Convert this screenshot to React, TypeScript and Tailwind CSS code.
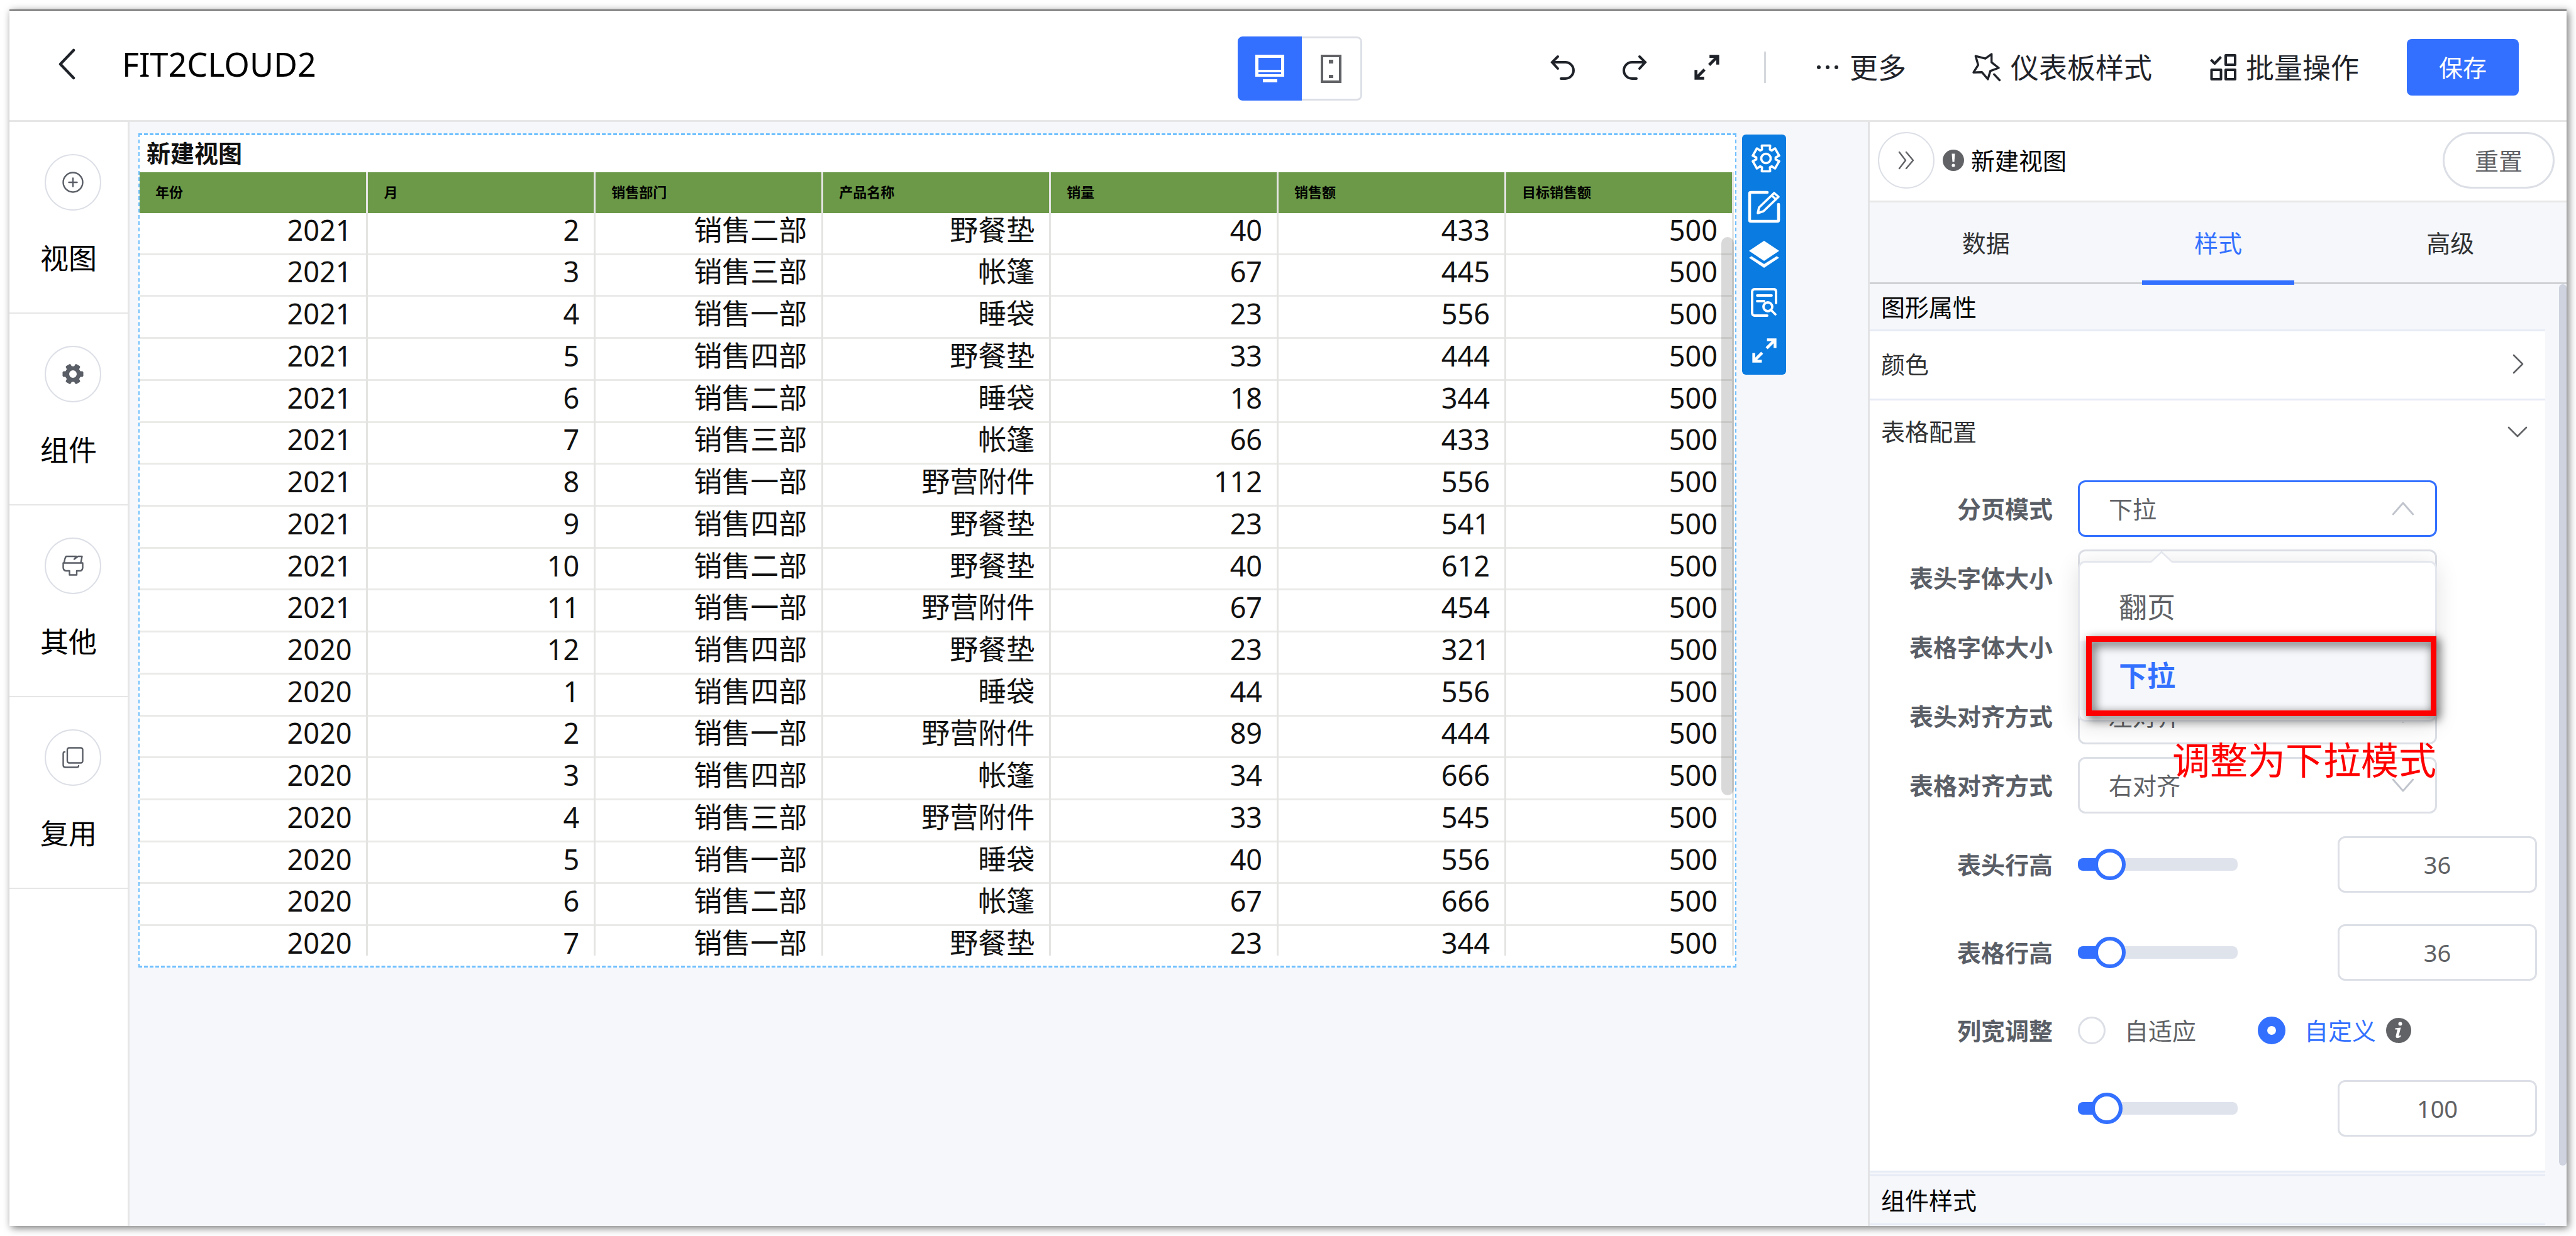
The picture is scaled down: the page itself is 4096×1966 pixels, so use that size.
import React, { useState } from "react";

const columns = ["年份", "月", "销售部门", "产品名称", "销量", "销售额", "目标销售额"];

const rows: string[][] = [
  ["2021", "2", "销售二部", "野餐垫", "40", "433", "500"],
  ["2021", "3", "销售三部", "帐篷", "67", "445", "500"],
  ["2021", "4", "销售一部", "睡袋", "23", "556", "500"],
  ["2021", "5", "销售四部", "野餐垫", "33", "444", "500"],
  ["2021", "6", "销售二部", "睡袋", "18", "344", "500"],
  ["2021", "7", "销售三部", "帐篷", "66", "433", "500"],
  ["2021", "8", "销售一部", "野营附件", "112", "556", "500"],
  ["2021", "9", "销售四部", "野餐垫", "23", "541", "500"],
  ["2021", "10", "销售二部", "野餐垫", "40", "612", "500"],
  ["2021", "11", "销售一部", "野营附件", "67", "454", "500"],
  ["2020", "12", "销售四部", "野餐垫", "23", "321", "500"],
  ["2020", "1", "销售四部", "睡袋", "44", "556", "500"],
  ["2020", "2", "销售一部", "野营附件", "89", "444", "500"],
  ["2020", "3", "销售四部", "帐篷", "34", "666", "500"],
  ["2020", "4", "销售三部", "野营附件", "33", "545", "500"],
  ["2020", "5", "销售一部", "睡袋", "40", "556", "500"],
  ["2020", "6", "销售二部", "帐篷", "67", "666", "500"],
  ["2020", "7", "销售一部", "野餐垫", "23", "344", "500"],
];

type IconProps = { className?: string };

const stroke = {
  fill: "none",
  stroke: "currentColor",
  strokeLinecap: "round" as const,
  strokeLinejoin: "round" as const,
};

function ChevronIcon({ className, d }: IconProps & { d: string }) {
  return (
    <svg viewBox="0 0 32 32" className={className} {...stroke} strokeWidth={2.6} aria-hidden="true">
      <path d={d} />
    </svg>
  );
}

function BackIcon() {
  return (
    <svg viewBox="0 0 28 50" className="h-[50px] w-7" {...stroke} strokeWidth={4.5} aria-hidden="true">
      <path d="M25 3 L4 25 L25 47" />
    </svg>
  );
}

function MonitorIcon() {
  return (
    <svg viewBox="0 0 46 44" className="h-11 w-[46px]" aria-hidden="true">
      <path fill="currentColor" fillRule="evenodd" d="M0 0h46v35H0zM5 5v19h36V5zM5 28v3h36v-3zM12 39h23v5H12z" />
    </svg>
  );
}

function PhoneIcon() {
  return (
    <svg viewBox="0 0 33 45" className="h-[45px] w-[33px]" aria-hidden="true">
      <path fill="currentColor" fillRule="evenodd" d="M0 0h33v45H0zM4 4v37h25V4zM13 8h7v6h-7zM13 32h7v5h-7z" />
    </svg>
  );
}

function UndoIcon({ className }: IconProps) {
  return (
    <svg viewBox="0 0 40 40" className={className} {...stroke} strokeWidth={4} strokeLinejoin="miter" aria-hidden="true">
      <path d="M12 3 L3 12 L12 22" />
      <path d="M4 12 H24 A13 13 0 0 1 24 38 H17" />
    </svg>
  );
}

function ExpandIcon({ className }: IconProps) {
  return (
    <svg viewBox="0 0 40 40" className={className} fill="none" stroke="currentColor" strokeWidth={4.4} aria-hidden="true">
      <path d="M24 3.5 H36.500 V16 M36 4 L23.500 16.500" />
      <path d="M16 36.500 H3.500 V24 M4 36 L16.500 23.500" />
    </svg>
  );
}

function StarIcon() {
  return (
    <svg viewBox="0 0 46 46" className="size-[46px]" {...stroke} strokeWidth={3.4} aria-hidden="true">
      <path d="M5.400 5.200 L20.800 9.200 L30.700 2 L30.700 15.100 L42 24 L28.800 28.800 L24.800 42 L15.300 30.700 L2 31.200 L9.400 19.400 Z" />
      <path d="M34.700 34.200 L43.500 43.500" />
    </svg>
  );
}

function BatchIcon() {
  return (
    <svg viewBox="0 0 42 42" className="size-[42px]" fill="none" stroke="currentColor" strokeWidth={4} strokeLinejoin="round" aria-hidden="true">
      <path d="M1.500 9 L7.500 15 L17.500 4.500" />
      <path d="M25 2h15v15H25zM2.500 25h15v15H2.500zM25 25h15v15H25z" />
    </svg>
  );
}

function PlusCircleIcon() {
  return (
    <svg viewBox="0 0 34 34" className="size-[34px]" {...stroke} strokeWidth={2.4} aria-hidden="true">
      <circle cx="17" cy="17" r="15.500" />
      <path d="M17 10.500v13M10.500 17h13" />
    </svg>
  );
}

function SolidGearIcon() {
  return (
    <svg viewBox="0 0 34 34" className="size-[34px]" aria-hidden="true">
      <g fill="currentColor">
        {[0, 60, 120].map((a) => (
          <rect key={a} x="0.500" y="12.500" width="33" height="9" rx="2" transform={`rotate(${a} 17 17)`} />
        ))}
        <circle cx="17" cy="17" r="12.500" />
      </g>
      <circle cx="17" cy="17" r="6" fill="#fff" />
    </svg>
  );
}

function BrushIcon() {
  return (
    <svg viewBox="0 0 34 34" className="size-[34px]" {...stroke} strokeWidth={2.4} aria-hidden="true">
      <path d="M3 12 Q4 5 6 2 H22.500 L19 6.500 L25 2 H31.500 L29.500 12" />
      <path d="M1.500 12.500 H32.500 V20 Q32 24.500 28.500 25 H23 V31.500 H11.500 V25 H6 Q2 24.500 1.500 20 Z" />
    </svg>
  );
}

function CopyIcon() {
  return (
    <svg viewBox="0 0 34 34" className="size-[34px]" {...stroke} strokeWidth={2.4} aria-hidden="true">
      <rect x="8" y="1.500" width="24.500" height="24" rx="3" />
      <path d="M4 8 Q1.500 8 1.500 11 V29 Q1.500 32.500 5 32.500 H23 Q26 32.500 26 30" />
    </svg>
  );
}

function GearIcon() {
  const teeth = [0, 60, 120, 180, 240, 300];
  const pt = (deg: number, r: number) => {
    const a = ((deg - 90) * Math.PI) / 180;
    return `${(24 + r * Math.cos(a)).toFixed(2)} ${(24 + r * Math.sin(a)).toFixed(2)}`;
  };
  const d =
    teeth
      .map((t, i) => `${i ? "L" : "M"}${pt(t - 24, 15.5)} L${pt(t - 18, 21.5)} L${pt(t + 18, 21.5)} L${pt(t + 24, 15.5)}`)
      .join(" ") + "Z";
  return (
    <svg viewBox="0 0 48 48" className="size-12" {...stroke} strokeWidth={3.6} aria-hidden="true">
      <path d={d} />
      <circle cx="24" cy="24" r="7.500" />
    </svg>
  );
}

function EditIcon() {
  return (
    <svg viewBox="0 0 52 52" className="size-[52px]" {...stroke} strokeWidth={4.6} aria-hidden="true">
      <path d="M31 3 H5 Q3 3 3 5 V47 Q3 49 5 49 H47 Q49 49 49 47 V22" />
      <path d="M16 36 L18 27 L42 4 L49 10 L25 33 Z M38 8 L45 14" strokeWidth={3.6} />
    </svg>
  );
}

function LayersIcon() {
  return (
    <svg viewBox="0 0 48 43" className="h-[43px] w-12" aria-hidden="true">
      <path fill="currentColor" d="M24 0 L48 16 L24 32 L0 16 Z" />
      <path fill="currentColor" d="M0 27 L4 24.500 L24 37 L44 24.500 L48 27 L24 43 Z" />
    </svg>
  );
}

function DetailIcon() {
  return (
    <svg viewBox="0 0 42 46" className="h-[46px] w-[42px]" {...stroke} strokeWidth={3.8} aria-hidden="true">
      <path d="M26 44 H6 Q2 44 2 40 V6 Q2 2 6 2 H36 Q40 2 40 6 V24" />
      <path d="M10 12 H33 M10 21 H21" />
      <circle cx="27" cy="30" r="7" />
      <path d="M33 36 L39 42" />
    </svg>
  );
}

function DoubleRightIcon() {
  return (
    <svg viewBox="0 0 28 30" className="h-[30px] w-7" {...stroke} strokeWidth={2.4} aria-hidden="true">
      <path d="M3 2 L13 15 L3 28 M14 2 L25 15 L14 28" />
    </svg>
  );
}

function AlertDot() {
  return (
    <svg viewBox="0 0 34 34" className="size-[34px] text-[#606266]" aria-hidden="true">
      <circle cx="17" cy="17" r="17" fill="currentColor" />
      <path d="M14.500 6.500h5l-1 13h-3z" fill="#fff" />
      <circle cx="17" cy="25" r="2.600" fill="#fff" />
    </svg>
  );
}

function InfoDot() {
  return (
    <svg viewBox="0 0 40 40" className="size-10 text-[#606266]" aria-hidden="true">
      <circle cx="20" cy="20" r="20" fill="currentColor" />
      <circle cx="22.500" cy="9.500" r="3" fill="#fff" />
      <path d="M14.500 16.500 L23.500 15.500 L20 29 L23.500 27.500 L23 30.500 Q15 34.500 15.500 29 L18 18.500 L14.500 18.500 Z" fill="#fff" />
    </svg>
  );
}

function SideItem({ label, children }: { label: string; children: React.ReactNode }) {
  return (
    <button type="button" className="flex h-[305px] flex-col items-center border-b-2 border-[#e6e6e6] pt-[51px] text-black">
      <span className="ml-[14px] flex size-[90px] items-center justify-center rounded-full border-2 border-[#dcdfe6] text-[#5a5e66]">
        {children}
      </span>
      <span className="mt-[52px] text-[45px] leading-[48px]">{label}</span>
    </button>
  );
}

function Header() {
  return (
    <header className="flex h-[177px] shrink-0 items-center border-b-[3px] border-[#e6e6e6] bg-white pt-[6px] pr-[76px] pl-[77px] text-[#1f2329]">
      <div className="flex flex-1 items-center gap-[74px] pb-[10px]">
        <button type="button" aria-label="返回">
          <BackIcon />
        </button>
        <h1 className="text-[52px] text-black">FIT2CLOUD2</h1>
      </div>
      <div className="mt-1 ml-9 flex h-[102px] overflow-hidden rounded-lg">
        <button type="button" aria-label="PC端" className="flex w-[102px] items-center justify-center bg-[#3370ff] text-white">
          <MonitorIcon />
        </button>
        <button
          type="button"
          aria-label="移动端"
          className="flex w-24 items-center justify-center rounded-r-lg border-[3px] border-l-0 border-[#dcdfe6] text-[#606266]"
        >
          <PhoneIcon />
        </button>
      </div>
      <div className="flex flex-1 items-center justify-end">
        <button type="button" aria-label="撤销" className="mr-[74px]">
          <UndoIcon className="size-10" />
        </button>
        <button type="button" aria-label="恢复" className="mr-[74px]">
          <UndoIcon className="size-10 -scale-x-100" />
        </button>
        <button type="button" aria-label="全屏" className="mr-[70px]">
          <ExpandIcon className="size-[42px]" />
        </button>
        <span className="mr-[80px] h-[50px] w-[3px] bg-[#d5d8dd]" />
        <button type="button" className="mr-[105px] flex items-center gap-[17px] text-[45px]">
          <svg viewBox="0 0 36 8" className="h-2 w-9" fill="currentColor" aria-hidden="true">
            <circle cx="4" cy="4" r="3" />
            <circle cx="18" cy="4" r="3" />
            <circle cx="32" cy="4" r="3" />
          </svg>
          更多
        </button>
        <button type="button" className="mr-[92px] flex items-center gap-[15px] text-[45px]">
          <StarIcon />
          仪表板样式
        </button>
        <button type="button" className="mr-[76px] flex items-center gap-[15px] text-[45px]">
          <BatchIcon />
          批量操作
        </button>
        <button type="button" className="h-[90px] w-[178px] rounded-lg bg-[#3370ff] text-[38px] text-white">
          保存
        </button>
      </div>
    </header>
  );
}

function DataTable() {
  return (
    <div className="relative mr-[2px] h-[1246px] overflow-hidden">
      <table className="h-[1266px] w-full table-fixed border-collapse text-[45px] leading-[50px] text-[#111]">
        <thead>
          <tr className="h-[65px] bg-[#6b9948] text-left text-[22px] leading-6 text-black">
            {columns.map((c) => (
              <th key={c} scope="col" className="border-r-[3px] border-[#e4e4e2] p-0 pb-1 pl-[25px] font-bold">
                {c}
              </th>
            ))}
          </tr>
        </thead>
        <tbody>
          {rows.map((r, i) => (
            <tr key={i} className="border-b-[3px] border-[#eaeae8]">
              {r.map((v, j) => (
                <td key={j} className="border-r-[3px] border-[#e4e4e2] p-0 pr-[23px] pb-[10px] text-right">
                  {v}
                </td>
              ))}
            </tr>
          ))}
        </tbody>
      </table>
      <div className="absolute top-[103px] right-0 h-[888px] w-5 rounded-full bg-black/15" />
    </div>
  );
}

function Canvas() {
  return (
    <main className="flex min-w-0 flex-1 items-start bg-[#f5f7fa] pt-[18px] pr-[130px] pl-[14px]">
      <section className="h-[1327px] min-w-0 flex-1 border-[3px] border-x-2 border-dashed border-[#70c0ff] bg-white">
        <h2 className="h-[59px] pl-[11px] text-[38px] leading-[56px] font-bold text-[#111]">新建视图</h2>
        <DataTable />
      </section>
      <div className="mt-0.5 ml-[9px] grid h-[382px] w-[70px] shrink-0 grid-rows-5 rounded-md bg-[#0a7be0] text-white">
        <button type="button" aria-label="设置" className="flex items-center justify-center pl-1.5">
          <GearIcon />
        </button>
        <button type="button" aria-label="编辑" className="flex items-center justify-center">
          <EditIcon />
        </button>
        <button type="button" aria-label="图层" className="flex items-center justify-center">
          <LayersIcon />
        </button>
        <button type="button" aria-label="查看详情" className="flex items-center justify-center">
          <DetailIcon />
        </button>
        <button type="button" aria-label="放大" className="flex items-center justify-center">
          <ExpandIcon className="size-[41px]" />
        </button>
      </div>
    </main>
  );
}

const labelClass = "w-[291px] shrink-0 text-right font-bold text-[#5a5e66]";

function SelectRow({
  id,
  label,
  options,
  open,
  children,
}: {
  id: string;
  label: string;
  options: string[];
  open?: boolean;
  children?: React.ReactNode;
}) {
  return (
    <div className="flex h-[90px] items-center">
      <label htmlFor={id} className={labelClass}>
        {label}
      </label>
      <div className="relative ml-10 h-full w-[571px]">
        <select
          id={id}
          className={
            open
              ? "size-full appearance-none rounded-xl border-[3px] border-[#3370ff] bg-white pl-[46px] text-[#606266]"
              : "size-full appearance-none rounded-xl border-[3px] border-[#dcdfe6] bg-white pl-[46px] text-[#606266]"
          }
        >
          {options.map((o) => (
            <option key={o}>{o}</option>
          ))}
        </select>
        <ChevronIcon
          className="pointer-events-none absolute top-[27px] right-[36px] size-9 text-[#c0c4cc]"
          d={open ? "M2 24 L16 8 L30 24" : "M2 8 L16 24 L30 8"}
        />
        {children}
      </div>
    </div>
  );
}

function SliderInput({ label, initial, max }: { label: string; initial: number; max: number }) {
  const [value, setValue] = useState(initial);
  const pct = Math.min(100, (value / max) * 100);
  return (
    <div className="ml-10 flex flex-1 items-center justify-between pr-[13px]">
      <input
        type="range"
        aria-label={label}
        min={0}
        max={max}
        value={value}
        onChange={(e) => setValue(Number(e.target.value))}
        style={{ backgroundImage: `linear-gradient(to right, #3370ff ${pct + 4}%, #dfe3ec ${pct + 4}%)` }}
        className="h-5 w-[254px] appearance-none rounded-lg [&::-webkit-slider-thumb]:size-[50px] [&::-webkit-slider-thumb]:appearance-none [&::-webkit-slider-thumb]:rounded-full [&::-webkit-slider-thumb]:border-[6px] [&::-webkit-slider-thumb]:border-solid [&::-webkit-slider-thumb]:border-[#3370ff] [&::-webkit-slider-thumb]:bg-white"
      />
      <input
        type="text"
        aria-label={`${label}数值`}
        value={value}
        onChange={(e) => setValue(Number(e.target.value) || 0)}
        className="h-[90px] w-[317px] rounded-xl border-[3px] border-[#dcdfe6] bg-white text-center text-[#606266]"
      />
    </div>
  );
}

function PageModeMenu() {
  return (
    <div className="absolute top-[128px] left-0 z-10 w-full rounded-xl border-[3px] border-[#e4e7ed] bg-white py-4 text-[45px] shadow-[0_6px_36px_rgba(0,0,0,0.12)]">
      <svg viewBox="0 0 34 20" className="absolute -top-[18px] left-[113px] h-5 w-[34px]" aria-hidden="true">
        <path d="M0 18 L17 1 L34 18 V20 H0 Z" fill="#fff" />
        <path d="M0 17 L17 1 L34 17" fill="none" stroke="#e4e7ed" strokeWidth="2.500" />
      </svg>
      <ul role="listbox" aria-label="分页模式">
        <li role="option" aria-selected="false" className="flex h-[109px] items-center pl-[62px] text-[#606266]">
          翻页
        </li>
        <li role="option" aria-selected="true" className="flex h-[109px] items-center bg-[#f5f7fa] pl-[62px] font-bold text-[#3370ff]">
          下拉
        </li>
      </ul>
      <div className="pointer-events-none absolute top-[117px] right-[-2px] left-[10px] h-[127px] border-[9px] border-[#ff0000] drop-shadow-[4px_5px_8px_rgba(0,0,0,0.75)]" />
      <p className="pointer-events-none absolute top-[282px] right-[-2px] text-[60px] leading-[64px] whitespace-nowrap text-[#ff0000]">
        调整为下拉模式
      </p>
    </div>
  );
}

function PropertyPanel() {
  return (
    <aside className="flex w-[1111px] shrink-0 flex-col border-l-[3px] border-[#e3e3e5] bg-white text-[38px]">
      <div className="flex h-[128px] shrink-0 items-center border-b-[3px] border-[#e8e8e8] pr-[19px] pb-1 pl-[13px]">
        <button
          type="button"
          aria-label="收起"
          className="flex size-[90px] items-center justify-center rounded-full border-2 border-[#dcdfe6] text-[#606266]"
        >
          <DoubleRightIcon />
        </button>
        <span className="ml-[13px]">
          <AlertDot />
        </span>
        <span className="ml-[11px] flex-1 text-black">新建视图</span>
        <button type="button" className="h-[90px] w-[178px] rounded-full border-[3px] border-[#dcdfe6] text-[#606266]">
          重置
        </button>
      </div>
      <div role="tablist" className="grid h-[130px] shrink-0 grid-cols-3 border-b-[3px] border-[#cfd1d4] bg-[#f5f7fa] text-[#303133]">
        <button type="button" role="tab" aria-selected="false">
          数据
        </button>
        <button type="button" role="tab" aria-selected="true" className="relative text-[#3370ff]">
          样式
          <span className="absolute -bottom-[4px] left-1/2 h-[7px] w-[242px] -translate-x-1/2 bg-[#3370ff]" />
        </button>
        <button type="button" role="tab" aria-selected="false">
          高级
        </button>
      </div>
      <div className="flex flex-1 items-start justify-between bg-[#f5f7fa]">
        <div className="w-[1074px]">
          <h3 className="flex h-[75px] items-center border-b-[3px] border-[#e6ebf5] pl-[18px] text-black">图形属性</h3>
          <button
            type="button"
            className="flex h-[110px] w-full items-center justify-between border-b-[3px] border-[#e6ebf5] bg-white pr-[28px] pb-1 pl-[18px] text-[#303133]"
          >
            颜色
            <ChevronIcon className="size-8 text-[#606266]" d="M10 2 L24 16 L10 30" />
          </button>
          <div className="border-b-[3px] border-[#e6ebf5] bg-white pb-[54px]">
            <button
              type="button"
              aria-expanded="true"
              className="flex h-[102px] w-full items-center justify-between pr-[28px] pb-1 pl-[18px] text-[#303133]"
            >
              表格配置
              <ChevronIcon className="size-8 text-[#606266]" d="M2 10 L16 24 L30 10" />
            </button>
            <div className="mt-[25px] flex flex-col gap-5">
              <SelectRow id="page-mode" label="分页模式" options={["下拉", "翻页"]} open>
                <PageModeMenu />
              </SelectRow>
              <SelectRow id="header-font" label="表头字体大小" options={["12"]} />
              <SelectRow id="cell-font" label="表格字体大小" options={["24"]} />
              <SelectRow id="header-align" label="表头对齐方式" options={["左对齐", "居中", "右对齐"]} />
              <SelectRow id="cell-align" label="表格对齐方式" options={["右对齐", "居中", "左对齐"]} />
            </div>
            <div className="mt-9 flex items-center">
              <span className={labelClass}>表头行高</span>
              <SliderInput label="表头行高" initial={36} max={286} />
            </div>
            <div className="mt-[50px] flex items-center">
              <span className={labelClass}>表格行高</span>
              <SliderInput label="表格行高" initial={36} max={286} />
            </div>
            <div role="radiogroup" aria-label="列宽调整" className="mt-[56px] flex h-[46px] items-center">
              <span className={labelClass}>列宽调整</span>
              <label className="ml-10 flex items-center gap-[30px] text-[#606266]">
                <input
                  type="radio"
                  name="column-width"
                  className="size-[44px] appearance-none rounded-full border-[3px] border-[#dcdfe6] checked:border-[15px] checked:border-[#3370ff]"
                />
                自适应
              </label>
              <label className="ml-[98px] flex items-center gap-[30px] text-[#3370ff]">
                <input
                  type="radio"
                  name="column-width"
                  defaultChecked
                  className="size-[44px] appearance-none rounded-full border-[3px] border-[#dcdfe6] checked:border-[15px] checked:border-[#3370ff]"
                />
                自定义
              </label>
              <span className="ml-4">
                <InfoDot />
              </span>
            </div>
            <div className="mt-[56px] flex items-center">
              <span className={labelClass} />
              <SliderInput label="列宽" initial={100} max={950} />
            </div>
          </div>
          <h3 className="mt-[3px] flex h-[81px] items-center border-y-[3px] border-[#e6ebf5] pl-[18px] text-black">组件样式</h3>
        </div>
        <div className="h-[1402px] w-3 rounded-full bg-[#cfd3df]" />
      </div>
    </aside>
  );
}

export default function App() {
  return (
    <div className="flex min-h-screen bg-white p-[15px] pb-4 font-['Noto_Sans','Noto_Sans_CJK_SC',sans-serif] leading-none">
      <div className="flex min-w-0 flex-1 flex-col border-t-2 border-[#6e6e6e] bg-white shadow-[3px_3px_12px_rgba(0,0,0,0.55)]">
        <Header />
        <div className="flex flex-1">
          <nav className="flex w-[191px] shrink-0 flex-col border-r-[3px] border-[#e6e6e6] bg-white">
            <SideItem label="视图">
              <PlusCircleIcon />
            </SideItem>
            <SideItem label="组件">
              <SolidGearIcon />
            </SideItem>
            <SideItem label="其他">
              <BrushIcon />
            </SideItem>
            <SideItem label="复用">
              <CopyIcon />
            </SideItem>
          </nav>
          <Canvas />
          <PropertyPanel />
        </div>
      </div>
    </div>
  );
}
